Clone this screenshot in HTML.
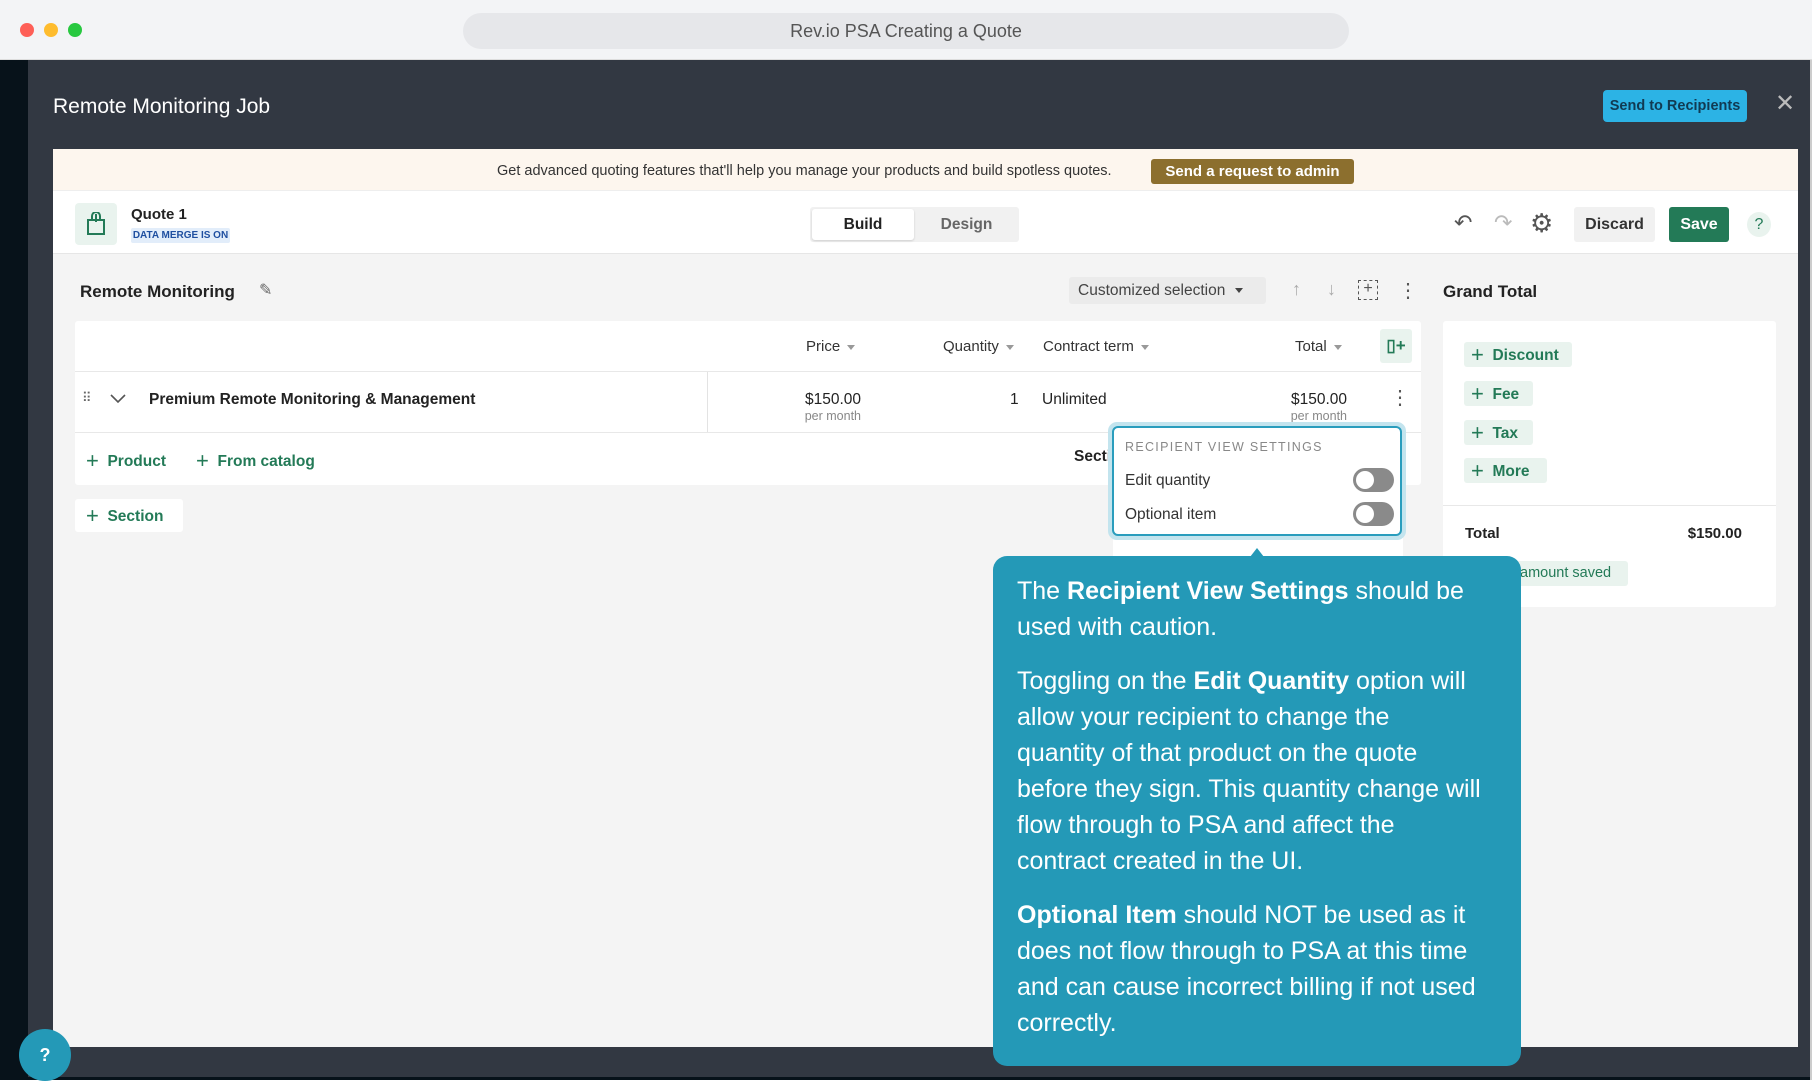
<!DOCTYPE html>
<html><head><meta charset="utf-8"><style>
*{box-sizing:border-box;margin:0;padding:0}
body{width:1812px;height:1080px;overflow:hidden;background:#fff;font-family:"Liberation Sans",Arial,sans-serif;color:#222;position:relative}
.a{position:absolute}
.g{color:#237a57;font-weight:bold}
.gb{background:#e9f3ee;border-radius:3px}
.hd{color:#333;font-size:15px}
.caret{display:inline-block;width:0;height:0;border-left:4px solid transparent;border-right:4px solid transparent;border-top:5px solid #999;vertical-align:middle;margin-left:7px}
.tog{width:41px;height:24px;border-radius:12px;background:#8a8a8a;}
.tog:after{content:"";position:absolute;left:3px;top:3px;width:18px;height:18px;border-radius:50%;background:#fff}
</style></head><body>
<div class="a" style="left:0;top:0;width:1812px;height:60px;background:#f3f4f6;border-bottom:1px solid #ddd"></div>
<div class="a" style="left:20px;top:23px;width:14px;height:14px;border-radius:50%;background:#fe5f57"></div>
<div class="a" style="left:44px;top:23px;width:14px;height:14px;border-radius:50%;background:#febc2e"></div>
<div class="a" style="left:68px;top:23px;width:14px;height:14px;border-radius:50%;background:#28c840"></div>
<div class="a" style="left:463px;top:13px;width:886px;height:36px;border-radius:18px;background:#e6e7ea;text-align:center;line-height:36px;font-size:18px;color:#555">Rev.io PSA Creating a Quote</div>
<div class="a" style="left:0;top:60px;width:1812px;height:1020px;background:#07121a"></div>
<div class="a" style="left:28px;top:60px;width:1782px;height:1017px;background:#323842"></div>
<div class="a" style="left:1810px;top:60px;width:2px;height:1020px;background:#ccc"></div>
<div class="a" style="left:53px;top:95px;font-size:21px;color:#fff">Remote Monitoring Job</div>
<div class="a" style="left:1603px;top:90px;width:144px;height:32px;border-radius:4px;background:#2cb3e5;color:#113a52;font-size:14.5px;font-weight:bold;text-align:center;line-height:32px">Send to Recipients</div>
<div class="a" style="left:1775px;top:92px;font-size:24px;color:#bbb;line-height:24px">✕</div>
<div class="a" style="left:53px;top:149px;width:1745px;height:898px;background:#f4f4f4"></div>
<div class="a" style="left:53px;top:149px;width:1745px;height:42px;background:#fdf6ee;border-bottom:1px solid #eee"></div>
<div class="a" style="left:497px;top:163px;font-size:14.5px;color:#333">Get advanced quoting features that'll help you manage your products and build spotless quotes.</div>
<div class="a" style="left:1151px;top:159px;width:203px;height:25px;border-radius:3px;background:#8c6f2e;color:#fff;font-size:15px;font-weight:bold;text-align:center;line-height:25px">Send a request to admin</div>
<div class="a" style="left:53px;top:191px;width:1745px;height:63px;background:#fff;border-bottom:1px solid #e6e6e6"></div>
<div class="a gb" style="left:75px;top:203px;width:42px;height:42px;border-radius:4px"></div>
<svg class="a" style="left:86px;top:212px" width="20" height="24" viewBox="0 0 20 24"><rect x="2" y="8" width="16" height="14" fill="none" stroke="#237a57" stroke-width="2"/><path d="M6 8V4a4 4 0 0 1 8 0v4" fill="none" stroke="#237a57" stroke-width="2"/><path d="M10 2v8" stroke="#237a57" stroke-width="2"/></svg>
<div class="a" style="left:131px;top:206px;font-size:15px;font-weight:bold">Quote 1</div>
<div class="a" style="left:131px;top:228px;width:99px;height:15px;background:#e2edfa;color:#1f4fa0;font-size:10px;font-weight:bold;text-align:center;line-height:15px;border-radius:2px">DATA MERGE IS ON</div>
<div class="a" style="left:810px;top:207px;width:209px;height:35px;background:#f1f1f1;border-radius:3px"></div>
<div class="a" style="left:812px;top:209px;width:102px;height:31px;background:#fff;border-radius:3px;box-shadow:0 1px 2px rgba(0,0,0,.15);text-align:center;line-height:31px;font-size:15.5px;font-weight:bold">Build</div>
<div class="a" style="left:914px;top:209px;width:105px;height:31px;text-align:center;line-height:31px;font-size:15.5px;font-weight:bold;color:#666">Design</div>
<div class="a" style="left:1454px;top:210px;font-size:22px;color:#555">↶</div>
<div class="a" style="left:1494px;top:210px;font-size:22px;color:#bbb">↷</div>
<div class="a" style="left:1530px;top:208px;font-size:26px;color:#555">⚙</div>
<div class="a" style="left:1574px;top:207px;width:81px;height:35px;background:#f1f1f1;border-radius:3px;text-align:center;line-height:35px;font-size:16px;font-weight:bold;color:#333">Discard</div>
<div class="a" style="left:1669px;top:207px;width:60px;height:35px;background:#237a57;border-radius:3px;text-align:center;line-height:35px;font-size:16px;font-weight:bold;color:#fff">Save</div>
<div class="a gb" style="left:1747px;top:212px;width:24px;height:25px;border-radius:50%;text-align:center;line-height:25px;color:#237a57;font-size:16px">?</div>
<div class="a" style="left:80px;top:282px;font-size:17px;font-weight:bold">Remote Monitoring</div>
<div class="a" style="left:259px;top:280px;font-size:16px;color:#666">✎</div>
<div class="a" style="left:1069px;top:277px;width:197px;height:27px;background:#ebebeb;border-radius:3px;font-size:15.5px;color:#444;line-height:27px;padding-left:9px">Customized selection<span class="caret" style="border-top-color:#444;margin-left:10px"></span></div>
<div class="a" style="left:1292px;top:279px;font-size:18px;color:#aaa">↑</div>
<div class="a" style="left:1327px;top:279px;font-size:18px;color:#aaa">↓</div>
<div class="a" style="left:1358px;top:280px;width:20px;height:20px;border:1.5px dashed #555;text-align:center;line-height:16px;font-size:16px;color:#555">+</div>
<div class="a" style="left:1398px;top:278px;font-size:20px;color:#555;line-height:26px">⋮</div>
<div class="a" style="left:1443px;top:282px;font-size:17px;font-weight:bold">Grand Total</div>
<div class="a" style="left:75px;top:321px;width:1346px;height:164px;background:#fff;border-radius:3px"></div>
<div class="a" style="left:75px;top:371px;width:1346px;height:1px;background:#e8e8e8"></div>
<div class="a" style="left:75px;top:432px;width:1346px;height:1px;background:#e8e8e8"></div>
<div class="a hd" style="left:806px;top:338px">Price<span class="caret"></span></div>
<div class="a hd" style="left:943px;top:338px">Quantity<span class="caret"></span></div>
<div class="a hd" style="left:1043px;top:338px">Contract term<span class="caret"></span></div>
<div class="a hd" style="left:1295px;top:338px">Total<span class="caret"></span></div>
<div class="a gb" style="left:1380px;top:329px;width:32px;height:34px;color:#237a57;font-weight:bold;font-size:17px;text-align:center;line-height:34px">▯+</div>
<div class="a" style="left:82px;top:390px;font-size:13px;color:#666;letter-spacing:-2px">⠿</div>
<svg class="a" style="left:110px;top:394px" width="16" height="10"><path d="M1 1l7 7 7-7" fill="none" stroke="#555" stroke-width="1.6"/></svg>
<div class="a" style="left:149px;top:391px;font-size:15.5px;font-weight:bold">Premium Remote Monitoring &amp; Management</div>
<div class="a" style="left:707px;top:372px;width:1px;height:60px;background:#e3e3e3"></div>
<div class="a" style="left:761px;top:391px;width:100px;text-align:right;font-size:15.5px">$150.00</div>
<div class="a" style="left:761px;top:409px;width:100px;text-align:right;font-size:12.5px;color:#888">per month</div>
<div class="a" style="left:1010px;top:391px;font-size:15.5px">1</div>
<div class="a" style="left:1042px;top:391px;font-size:15.5px">Unlimited</div>
<div class="a" style="left:1247px;top:391px;width:100px;text-align:right;font-size:15.5px">$150.00</div>
<div class="a" style="left:1247px;top:409px;width:100px;text-align:right;font-size:12.5px;color:#888">per month</div>
<div class="a" style="left:1390px;top:385px;font-size:20px;color:#555;line-height:26px">⋮</div>
<div class="a g" style="left:86px;top:448px;font-size:15.5px"><span style="font-size:22px;font-weight:normal;vertical-align:-2px">+</span>&nbsp; Product</div>
<div class="a g" style="left:196px;top:448px;font-size:15.5px"><span style="font-size:22px;font-weight:normal;vertical-align:-2px">+</span>&nbsp; From catalog</div>
<div class="a" style="left:1074px;top:448px;font-size:15.5px;font-weight:bold">Secti</div>
<div class="a g" style="left:75px;top:499px;width:108px;height:33px;background:#fff;border-radius:3px;font-size:15.5px;line-height:33px;padding-left:11px"><span style="font-size:22px;font-weight:normal;vertical-align:-2px">+</span>&nbsp; Section</div>
<div class="a" style="left:1443px;top:321px;width:333px;height:286px;background:#fff;border-radius:3px"></div>
<div class="a g gb" style="left:1464px;top:342px;width:108px;height:25px;font-size:15.5px;line-height:25px;padding-left:7px"><span style="font-size:22px;font-weight:normal;vertical-align:-2px">+</span>&nbsp; Discount</div>
<div class="a g gb" style="left:1464px;top:381px;width:69px;height:25px;font-size:15.5px;line-height:25px;padding-left:7px"><span style="font-size:22px;font-weight:normal;vertical-align:-2px">+</span>&nbsp; Fee</div>
<div class="a g gb" style="left:1464px;top:420px;width:69px;height:25px;font-size:15.5px;line-height:25px;padding-left:7px"><span style="font-size:22px;font-weight:normal;vertical-align:-2px">+</span>&nbsp; Tax</div>
<div class="a g gb" style="left:1464px;top:458px;width:83px;height:25px;font-size:15.5px;line-height:25px;padding-left:7px"><span style="font-size:22px;font-weight:normal;vertical-align:-2px">+</span>&nbsp; More</div>
<div class="a" style="left:1443px;top:505px;width:333px;height:1px;background:#e8e8e8"></div>
<div class="a" style="left:1465px;top:525px;font-size:15px;font-weight:bold">Total</div>
<div class="a" style="left:1642px;top:525px;width:100px;text-align:right;font-size:15px;font-weight:bold">$150.00</div>
<div class="a g gb" style="left:1490px;top:561px;width:138px;height:25px;font-size:14.5px;line-height:25px;padding-left:30px;font-weight:normal">amount saved</div>
<div class="a" style="left:1113px;top:530px;width:290px;height:30px;background:#fff"></div>
<div class="a" style="left:1108px;top:422px;width:298px;height:118px;border-radius:9px;border:4px solid #c3e4ee;background:#c3e4ee"></div>
<div class="a" style="left:1112px;top:426px;width:290px;height:110px;border-radius:6px;border:2.5px solid #2a9dbd;background:#fff"></div>
<div class="a" style="left:1125px;top:440px;font-size:12.5px;letter-spacing:1.3px;color:#888">RECIPIENT VIEW SETTINGS</div>
<div class="a" style="left:1125px;top:472px;font-size:15.5px;color:#333">Edit quantity</div>
<div class="a" style="left:1125px;top:506px;font-size:15.5px;color:#333">Optional item</div>
<div class="a tog" style="left:1353px;top:468px"></div>
<div class="a tog" style="left:1353px;top:502px"></div>
<div class="a" style="left:1250px;top:548px;width:0;height:0;border-left:7px solid transparent;border-right:7px solid transparent;border-bottom:9px solid #2499b7"></div>
<div class="a" style="left:993px;top:556px;width:528px;height:510px;background:#2499b7;border-radius:14px;color:#fff;font-size:25px;line-height:36px;padding:17px 10px 0 24px;white-space:nowrap">
<p>The <b>Recipient View Settings</b> should be<br>used with caution.</p>
<p style="margin-top:18px">Toggling on the <b>Edit Quantity</b> option will<br>allow your recipient to change the<br>quantity of that product on the quote<br>before they sign. This quantity change will<br>flow through to PSA and affect the<br>contract created in the UI.</p>
<p style="margin-top:18px"><b>Optional Item</b> should NOT be used as it<br>does not flow through to PSA at this time<br>and can cause incorrect billing if not used<br>correctly.</p>
</div>
<div class="a" style="left:19px;top:1029px;width:52px;height:52px;border-radius:50%;background:#2499b7;color:#fff;text-align:center;line-height:52px;font-size:18px;font-weight:bold">?</div>
</body></html>
